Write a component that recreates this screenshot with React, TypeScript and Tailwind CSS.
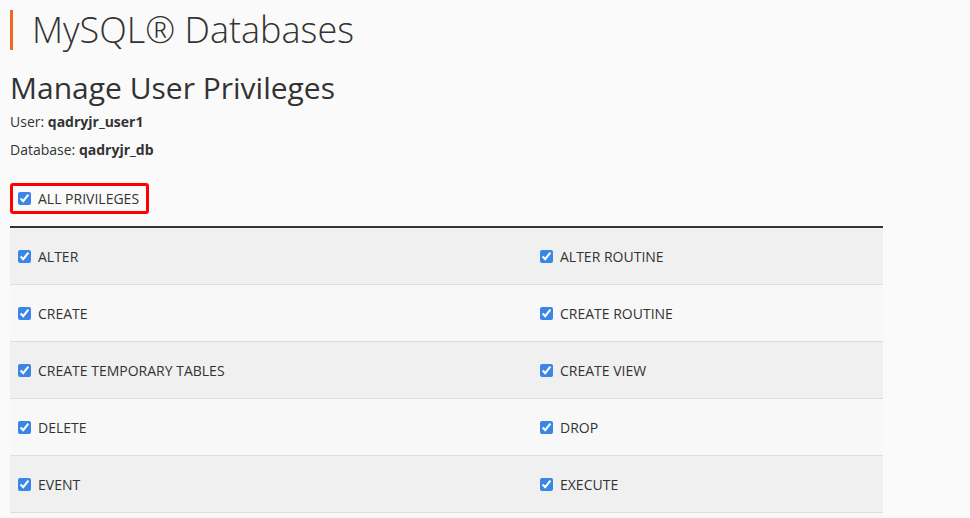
const rows: [string, string][] = [
  ["ALTER", "ALTER ROUTINE"],
  ["CREATE", "CREATE ROUTINE"],
  ["CREATE TEMPORARY TABLES", "CREATE VIEW"],
  ["DELETE", "DROP"],
  ["EVENT", "EXECUTE"],
];

function Check({ label }: { label: string }) {
  return (
    <label className="flex items-center gap-[7px] text-[14px] text-[#333]">
      <input type="checkbox" defaultChecked className="m-0 h-[13px] w-[13px] accent-[#3a86e6]" />
      <span>{label}</span>
    </label>
  );
}

export default function App() {
  return (
    <div
      className="h-[518px] overflow-hidden bg-[#fafafa] px-[10px] pt-[10px] text-[#333]"
      style={{ fontFamily: '"Open Sans", "Noto Sans", sans-serif' }}
    >
      <div className="flex items-center border-l-[3px] border-[#f26522] pl-[19px]">
        <h1 className="text-[36px] font-light leading-[40px] text-[#333]">MySQL® Databases</h1>
      </div>
      <h2 className="mt-[18px] text-[30px] leading-[40px] text-[#333]">Manage User Privileges</h2>
      <p className="mt-[4px] text-[14px] leading-[20px]">
        User: <b className="font-bold">qadryjr_user1</b>
      </p>
      <p className="mt-[8px] text-[14px] leading-[20px]">
        Database: <b className="font-bold">qadryjr_db</b>
      </p>
      <div className="mt-[23px] inline-flex h-[31px] items-center rounded-[3px] border-[3px] border-[#ff0000] pl-[5px] pr-[7px]">
        <Check label="ALL PRIVILEGES" />
      </div>
      <div className="mt-[12px] w-[873px] border-t-2 border-[#333]">
        {rows.map(([a, b], i) => (
          <div
            key={a}
            className={`grid h-[57px] grid-cols-[522px_1fr] items-center border-b border-[#ddd] ${
              i % 2 === 0 ? "bg-[#f0f0f0]" : "bg-[#f8f8f8]"
            }`}
          >
            <div className="pl-[8px]">
              <Check label={a} />
            </div>
            <div className="pl-[8px]">
              <Check label={b} />
            </div>
          </div>
        ))}
        <div className="h-[20px] bg-[#f8f8f8]" />
      </div>
    </div>
  );
}
